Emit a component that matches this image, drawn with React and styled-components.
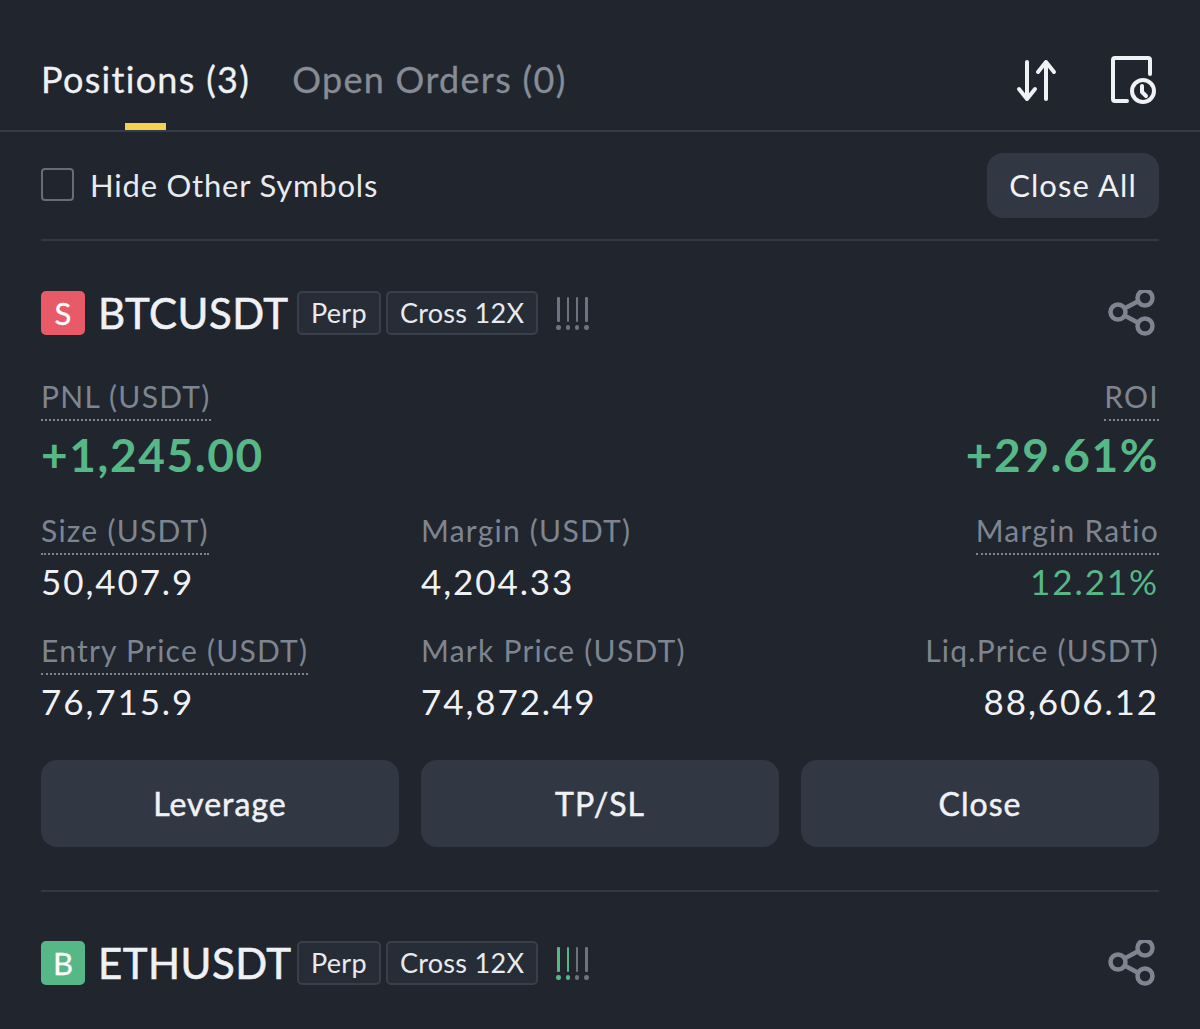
import styled, { createGlobalStyle } from "styled-components";

const GlobalStyle = createGlobalStyle`
  html, body {
    margin: 0;
    padding: 0;
    background: #20252e;
  }
  body {
    font-family: "Lato", "Liberation Sans", sans-serif;
    -webkit-font-smoothing: antialiased;
  }
`;

const Page = styled.div`
  width: 1200px;
  height: 1029px;
  overflow: hidden;
  background: #20252e;
  color: #f0f1f4;
`;

const TabBar = styled.div`
  height: 130px;
  padding: 0 43px 0 41px;
  display: flex;
  align-items: flex-start;
  border-bottom: 2px solid #363c47;
`;

const Tab = styled.div`
  position: relative;
  margin-top: 57px;
  margin-right: 42px;
  font-size: 36px;
  line-height: 44px;
  letter-spacing: 1.3px;
  -webkit-text-stroke: 0.3px currentColor;
  color: ${(p) => (p.$active ? "#f0f1f4" : "#878c96")};

  ${(p) =>
    p.$active &&
    `&::after {
      content: "";
      position: absolute;
      left: 84px;
      top: 66px;
      width: 41px;
      height: 7px;
      background: #f6d14f;
    }`}
`;

const TabIcons = styled.div`
  margin-left: auto;
  padding-top: 56px;
  display: flex;
  align-items: center;
  gap: 53px;
  color: #f0f1f4;
`;

const Content = styled.div`
  padding: 0 41px;
`;

const FilterRow = styled.div`
  height: 107px;
  display: flex;
  align-items: center;
  justify-content: space-between;
  border-bottom: 2px solid #333944;
`;

const Check = styled.label`
  display: flex;
  align-items: center;
  gap: 16px;
  padding-bottom: 2px;
  font-size: 31px;
  line-height: 36px;
  letter-spacing: 0.8px;
  color: #e9eaee;
`;

const Box = styled.span`
  width: 29px;
  height: 29px;
  border: 2px solid #666c78;
  border-radius: 4px;
`;

const SmallButton = styled.div`
  width: 172px;
  height: 65px;
  padding-bottom: 2px;
  box-sizing: border-box;
  border-radius: 16px;
  background: #323843;
  color: #f0f1f4;
  font-size: 31px;
  letter-spacing: 1.1px;
  display: flex;
  align-items: center;
  justify-content: center;
`;

const Card = styled.section`
  padding-top: ${(p) => (p.$last ? "49px" : "50px")};
  padding-bottom: 43px;
  border-bottom: ${(p) => (p.$last ? "none" : "2px solid #333944")};
`;

const CardHead = styled.div`
  display: flex;
  align-items: center;
  height: 44px;
`;

const Side = styled.span`
  width: 44px;
  height: 44px;
  border-radius: 5px;
  background: ${(p) => (p.$buy ? "#55b886" : "#e85a68")};
  color: #fff;
  font-size: 31px;
  -webkit-text-stroke: 0.3px #fff;
  display: flex;
  align-items: center;
  justify-content: center;
`;

const Symbol = styled.span`
  flex: 0 0 191px;
  min-width: 0;
  margin-left: 13px;
  margin-right: 8px;
  font-size: 42px;
  letter-spacing: 0.5px;
  -webkit-text-stroke: 0.6px currentColor;
  white-space: nowrap;
  color: #f0f1f4;
`;

const Tag = styled.span`
  height: 38px;
  padding: 0 12px 2px;
  margin-right: 5px;
  border: 2px solid #393f4b;
  border-radius: 5px;
  background: #272d37;
  font-size: 27px;
  letter-spacing: 0.3px;
  display: flex;
  align-items: center;
  color: #e9eaee;
`;

const Signal = styled.span`
  margin-left: 13px;
  display: flex;
  gap: 4.8px;
`;

const SignalBar = styled.span`
  width: 4.5px;
  height: 33px;
  display: flex;
  flex-direction: column;
  align-items: center;
  gap: 3px;
  color: ${(p) => (p.$on ? "#55b886" : "#6d7380")};

  &::before {
    content: "";
    width: 2.5px;
    flex: 1;
    background: currentColor;
    border-radius: 1px;
  }

  &::after {
    content: "";
    width: 4.5px;
    height: 4.5px;
    border-radius: 50%;
    background: currentColor;
  }
`;

const ShareWrap = styled.span`
  margin-left: auto;
  margin-right: 3px;
  color: #7e8591;
  display: flex;
`;

const PnlRow = styled.div`
  margin-top: 41px;
  display: flex;
  justify-content: space-between;
`;

const Stat = styled.div`
  display: flex;
  flex-direction: column;
  align-items: ${(p) => (p.$right ? "flex-end" : "flex-start")};
`;

const Label = styled.span`
  font-size: 30px;
  line-height: 40px;
  padding-bottom: 3px;
  letter-spacing: 1.25px;
  color: #7e8591;
  white-space: nowrap;
  border-bottom: 2px ${(p) => (p.$dotted ? "dotted #7e8591" : "solid transparent")};
`;

const BigValue = styled.span`
  margin-top: 6px;
  font-size: 46px;
  line-height: 56px;
  font-weight: 700;
  letter-spacing: 1.6px;
  color: #55b886;
`;

const StatGrid = styled.div`
  margin-top: 27px;
  display: grid;
  grid-template-columns: 380px 1fr auto;
  row-gap: 27px;
`;

const Value = styled.span`
  margin-top: 4px;
  font-size: 35px;
  line-height: 44px;
  letter-spacing: 1.9px;
  color: ${(p) => (p.$green ? "#55b886" : "#f0f1f4")};
`;

const Actions = styled.div`
  margin-top: 37px;
  display: grid;
  grid-template-columns: repeat(3, 1fr);
  gap: 22px;
`;

const ActionButton = styled.div`
  height: 87px;
  border-radius: 16px;
  background: #323843;
  font-size: 32px;
  letter-spacing: 1px;
  -webkit-text-stroke: 0.5px currentColor;
  color: #f0f1f4;
  display: flex;
  align-items: center;
  justify-content: center;
`;

const SortIcon = () => (
  <svg width="44" height="48" viewBox="0 0 44 48" fill="none" stroke="currentColor" strokeWidth="4" strokeLinecap="round" strokeLinejoin="round">
    <path d="M13 6V43M5 33L13 43L21 33" />
    <path d="M32 43V6M24 16L32 6L40 16" />
  </svg>
);

const HistoryIcon = () => (
  <svg width="46" height="48" viewBox="0 0 46 48" fill="none" stroke="currentColor" strokeWidth="4" strokeLinecap="round" strokeLinejoin="round">
    <path d="M16 45H4A2 2 0 0 1 2 43V4A2 2 0 0 1 4 2H37A2 2 0 0 1 39 4V18" />
    <circle cx="32" cy="35" r="11" />
    <path d="M31 30V36L35 40" />
  </svg>
);

const ShareIcon = () => (
  <svg width="48" height="46" viewBox="0 0 48 46" fill="none" stroke="currentColor" strokeWidth="4.5">
    <circle cx="37" cy="8" r="7.5" />
    <circle cx="10" cy="22" r="7.5" />
    <circle cx="37" cy="36" r="7.5" />
    <path d="M16.5 18.5L30.5 11M16.5 25.5L30.5 33" />
  </svg>
);

const PositionHead = ({ buy, symbol, level }) => (
  <CardHead>
    <Side $buy={buy}>{buy ? "B" : "S"}</Side>
    <Symbol>{symbol}</Symbol>
    <Tag>Perp</Tag>
    <Tag>Cross 12X</Tag>
    <Signal>
      {[0, 1, 2, 3].map((i) => (
        <SignalBar key={i} $on={i < level} />
      ))}
    </Signal>
    <ShareWrap>
      <ShareIcon />
    </ShareWrap>
  </CardHead>
);

const App = () => {
  return (
    <Page>
      <GlobalStyle />
      <TabBar>
        <Tab $active>Positions (3)</Tab>
        <Tab>Open Orders (0)</Tab>
        <TabIcons>
          <SortIcon />
          <HistoryIcon />
        </TabIcons>
      </TabBar>
      <Content>
        <FilterRow>
          <Check>
            <Box />
            Hide Other Symbols
          </Check>
          <SmallButton>Close All</SmallButton>
        </FilterRow>
        <Card>
          <PositionHead symbol="BTCUSDT" level={0} />
          <PnlRow>
            <Stat>
              <Label $dotted>PNL (USDT)</Label>
              <BigValue>+1,245.00</BigValue>
            </Stat>
            <Stat $right>
              <Label $dotted>ROI</Label>
              <BigValue>+29.61%</BigValue>
            </Stat>
          </PnlRow>
          <StatGrid>
            <Stat>
              <Label $dotted>Size (USDT)</Label>
              <Value>50,407.9</Value>
            </Stat>
            <Stat>
              <Label>Margin (USDT)</Label>
              <Value>4,204.33</Value>
            </Stat>
            <Stat $right>
              <Label $dotted>Margin Ratio</Label>
              <Value $green>12.21%</Value>
            </Stat>
            <Stat>
              <Label $dotted>Entry Price (USDT)</Label>
              <Value>76,715.9</Value>
            </Stat>
            <Stat>
              <Label>Mark Price (USDT)</Label>
              <Value>74,872.49</Value>
            </Stat>
            <Stat $right>
              <Label>Liq.Price (USDT)</Label>
              <Value>88,606.12</Value>
            </Stat>
          </StatGrid>
          <Actions>
            <ActionButton>Leverage</ActionButton>
            <ActionButton>TP/SL</ActionButton>
            <ActionButton>Close</ActionButton>
          </Actions>
        </Card>
        <Card $last>
          <PositionHead buy symbol="ETHUSDT" level={2} />
        </Card>
      </Content>
    </Page>
  );
};

export default App;
